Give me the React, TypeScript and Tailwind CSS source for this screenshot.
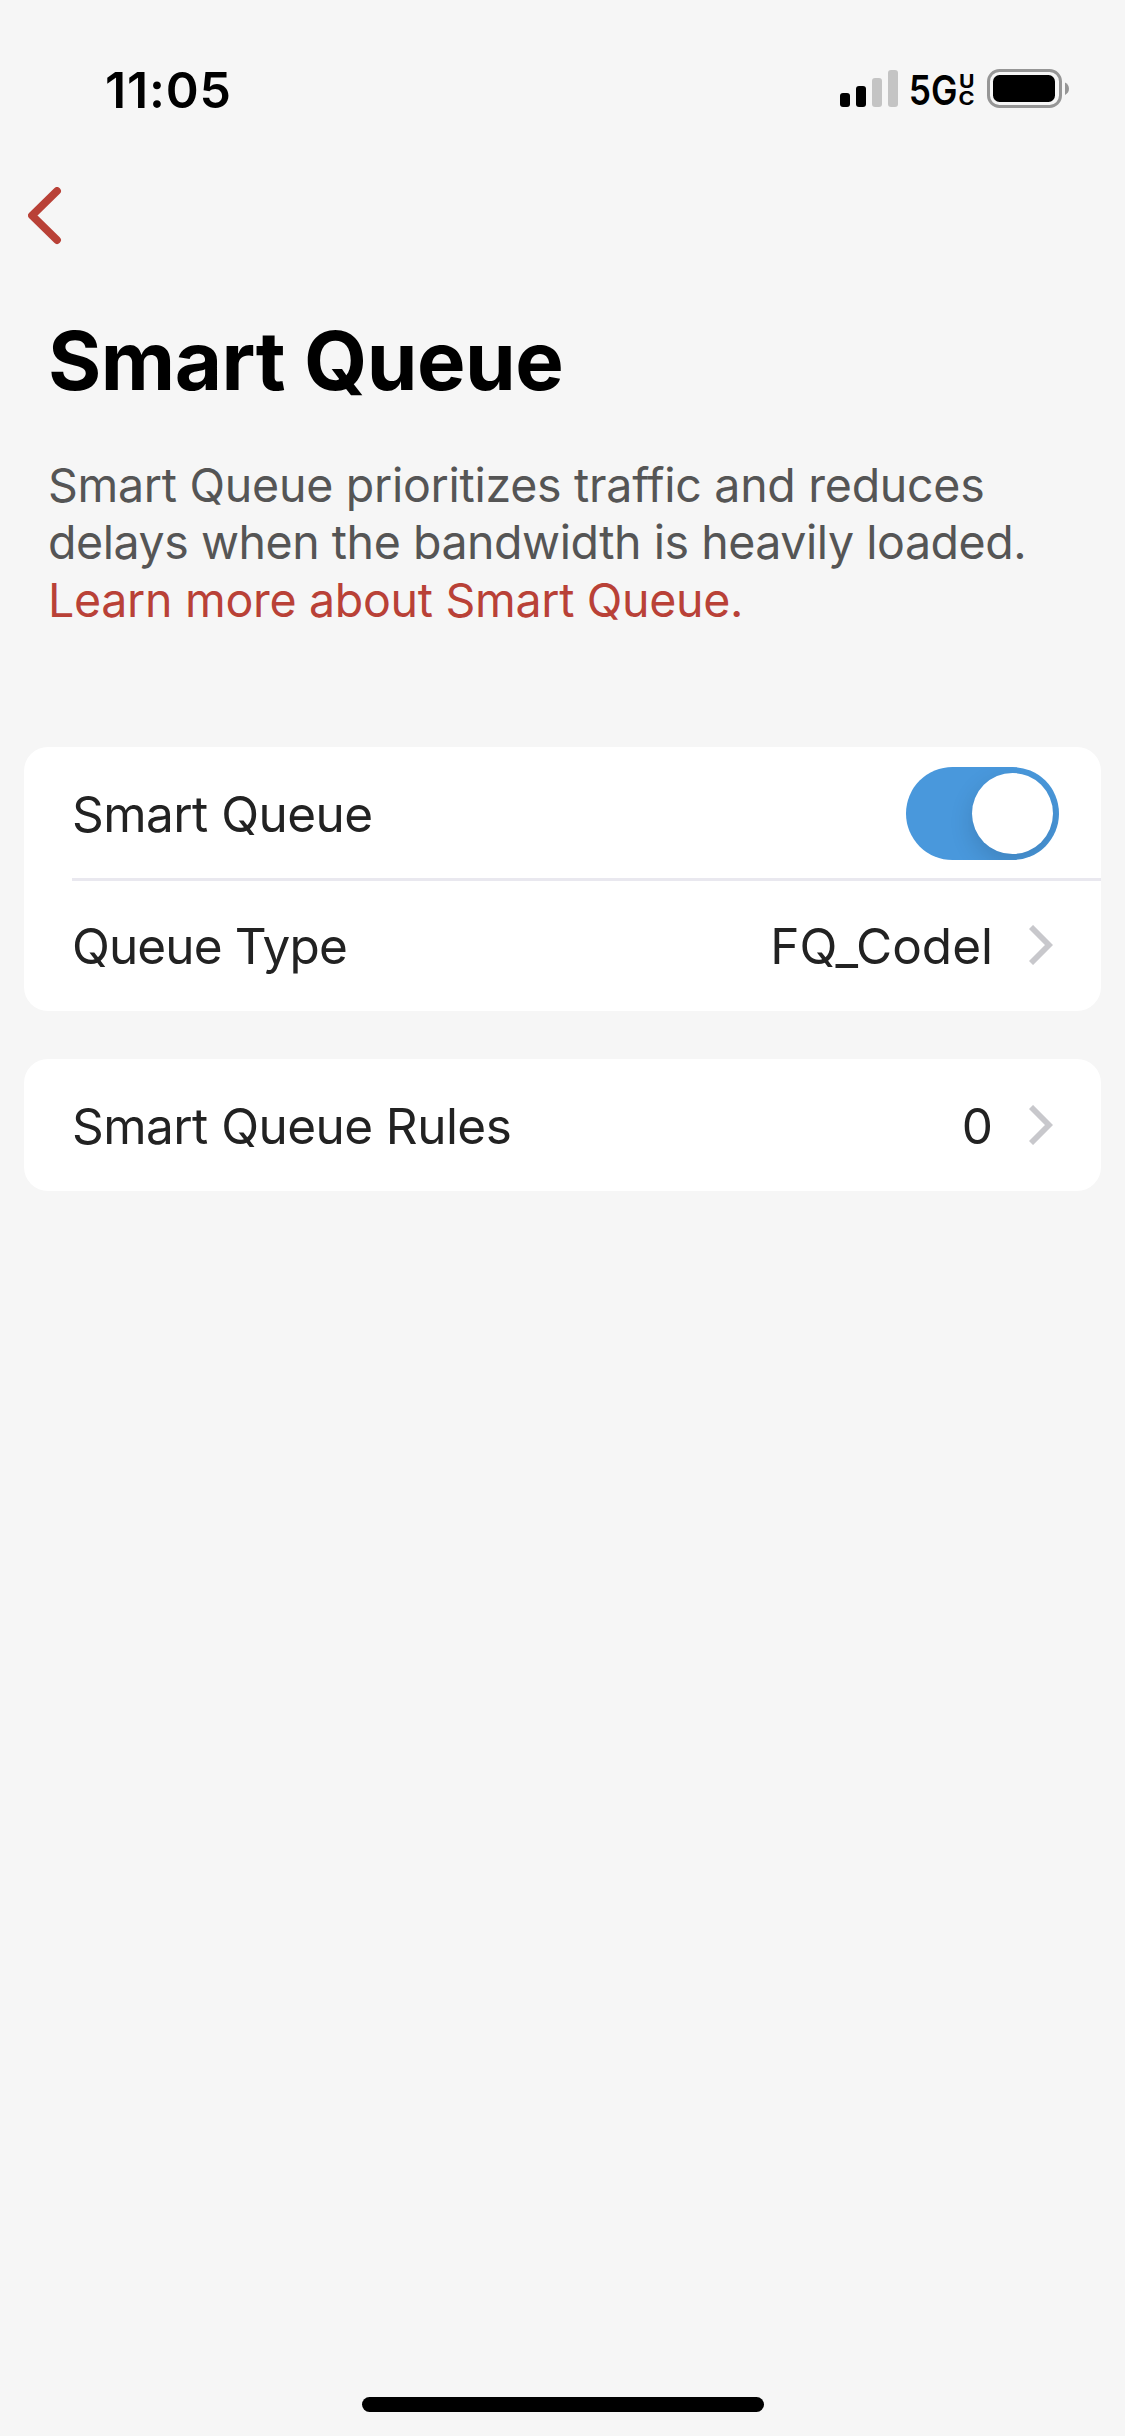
import React, { useState } from 'react';

const StatusBar: React.FC = () => (
  <header className="flex items-center justify-between h-[176px] pl-[105px] pr-[56px]">
    <span className="pt-[3px] text-[50px] leading-none font-semibold tracking-[0.8px] text-black">11:05</span>
    <svg width="229" height="60" viewBox="0 -10 229 60" aria-label="Signal and battery">
      <rect x="0" y="25" width="10" height="14" rx="3" fill="#000" />
      <rect x="16" y="18" width="10" height="21" rx="3" fill="#000" />
      <rect x="32" y="10" width="10" height="29" rx="3" fill="#c4c4c4" />
      <rect x="48" y="2" width="10" height="37" rx="3" fill="#c4c4c4" />
      <text x="68.8" y="37.3" fontSize="41" fontWeight="600" textLength="48.7" lengthAdjust="spacingAndGlyphs">
        5G
      </text>
      <text x="119" y="20" fontSize="19" fontWeight="700" textLength="15.5" lengthAdjust="spacingAndGlyphs">
        U
      </text>
      <text x="118.5" y="37.3" fontSize="19" fontWeight="700" textLength="16" lengthAdjust="spacingAndGlyphs">
        C
      </text>
      <rect x="148.5" y="2.5" width="72" height="36" rx="11" fill="none" stroke="#969696" strokeWidth="3" />
      <rect x="153" y="7" width="62" height="27" rx="6.5" fill="#000" />
      <path d="M225 14.5c2.5 1.2 4 3.6 4 6.3s-1.5 5-4 6.2z" fill="#969696" />
    </svg>
  </header>
);

const Chevron: React.FC = () => (
  <svg width="24" height="40" viewBox="0 0 24 40" fill="none" className="ml-[36px]">
    <path d="M2 2l18 18L2 38" stroke="#c8c8cc" strokeWidth="5.8" />
  </svg>
);

const Toggle: React.FC<{ on: boolean; onChange: () => void }> = ({ on, onChange }) => (
  <button
    role="switch"
    aria-checked={on}
    onClick={onChange}
    className={`flex w-[153px] h-[93px] p-[6px] mt-px mr-[-6px] rounded-full overflow-hidden ${
      on ? 'justify-end bg-[#4998dc]' : 'justify-start bg-[#e9e9eb]'
    }`}
  >
    <span className="size-[81px] rounded-full bg-white shadow-[0_9px_24px_rgba(0,0,0,0.14)]" />
  </button>
);

interface RowProps {
  label: string;
  value?: string;
  labelClass?: string;
  children?: React.ReactNode;
}

const Row: React.FC<RowProps> = ({ label, value, labelClass = 'tracking-[-0.55px]', children }) => (
  <div className="flex items-center h-[132px] pr-[48px]">
    <span className={`flex-1 pt-[2px] text-[49.5px] text-[#222] ${labelClass}`}>{label}</span>
    {value && <span className="pt-[2px] text-[49.5px] text-[#222]">{value}</span>}
    {children}
  </div>
);

export default function App() {
  const [enabled, setEnabled] = useState(true);

  return (
    <div className="flex flex-col w-[1125px] h-[2436px] bg-[#f6f6f6] font-['Inter',sans-serif]">
      <StatusBar />

      <nav className="h-[135px] pt-[11px] pl-[28px]">
        <svg width="34" height="58" viewBox="0 0 34 58" fill="none">
          <path d="M29 4L4 28.5 29 53" stroke="#b94137" strokeWidth="7.8" strokeLinecap="round" strokeLinejoin="round" />
        </svg>
      </nav>

      <div className="px-[48px]">
        <h1 className="text-[81.5px] leading-[100px] font-bold tracking-[-0.5px] text-black">Smart Queue</h1>
        <p className="mt-[46px] text-[46.5px] leading-[57.3px] text-[#555]">
          <span className="tracking-[-0.27px]">Smart Queue prioritizes traffic and reduces</span>
          <br />
          <span className="tracking-[-0.45px]">delays when the bandwidth is heavily loaded.</span>
          <br />
          <a href="#" className="tracking-[-0.3px] text-[#b94137]">Learn more about Smart Queue.</a>
        </p>
      </div>

      <main className="flex flex-col gap-[48px] mt-[118.1px] px-[24px]">
        <section className="pl-[48px] bg-white rounded-3xl">
          <Row label="Smart Queue">
            <Toggle on={enabled} onChange={() => setEnabled(!enabled)} />
          </Row>
          <div className="h-[3px] -mt-px -mb-[2px] bg-[#e9e8ef]" />
          <Row label="Queue Type" labelClass="tracking-[-0.9px]" value="FQ_Codel">
            <Chevron />
          </Row>
        </section>

        <section className="pl-[48px] bg-white rounded-3xl">
          <Row label="Smart Queue Rules" value="0">
            <Chevron />
          </Row>
        </section>
      </main>

      <div className="w-[402px] h-[15px] mt-auto mb-[24px] ml-[362px] rounded-full bg-black" />
    </div>
  );
}
